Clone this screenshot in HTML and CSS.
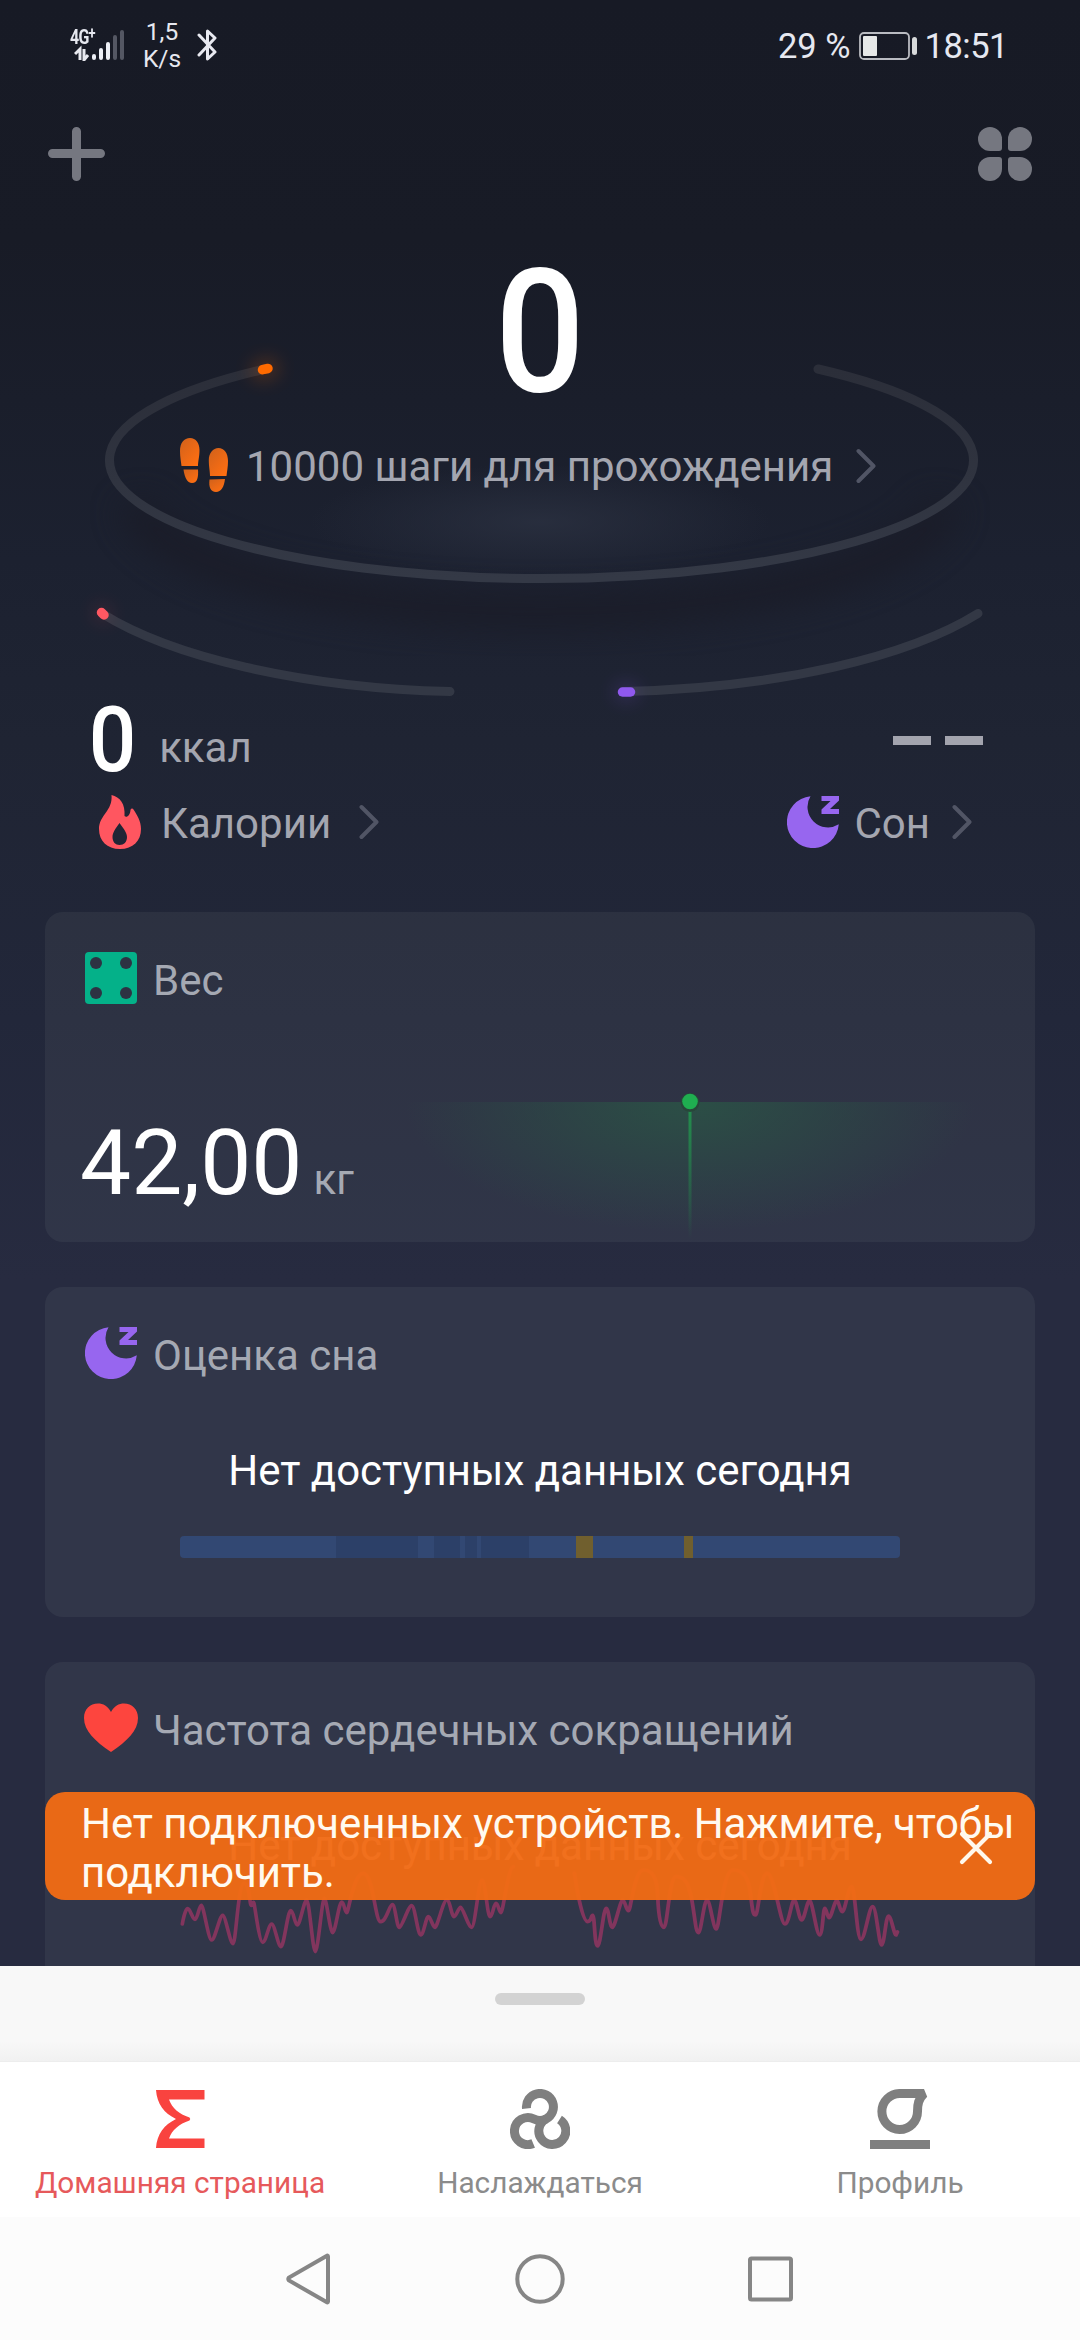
FILE: index.html
```html
<!DOCTYPE html>
<html lang="ru">
<head>
<meta charset="utf-8">
<title>Домашняя страница</title>
<link rel="stylesheet" href="styles.css">
</head>
<body>
<svg class="defs" width="0" height="0">
  <defs>
    <symbol id="moon" viewBox="0 0 52 52">
      <path d="M23.5 0.2 A26 26 0 1 0 51.8 28.3 A20.5 20.5 0 0 1 23.5 0.2Z" fill="#9766ef"/>
      <path d="M34.5 0H52V4.5L43 13H52V18H34.5V13.500L43.500 5H34.500Z" fill="#9766ef"/>
    </symbol>
    <symbol id="chevron" viewBox="0 0 20 36">
      <path d="M2.500 3L17.500 18L2.500 33" fill="none" stroke="#515565" stroke-width="4" stroke-linecap="round" stroke-linejoin="round"/>
    </symbol>
  </defs>
</svg>
<div class="phone">
  <main class="app">
    <header class="status">
      <div class="signal">
        <span class="net">4G<sup>+</sup></span>
        <svg width="52" height="32" viewBox="0 0 52 32">
          <path d="M1 25L6 20V31M10 20V31L14 26" fill="none" stroke="#e8e9f0" stroke-width="3"/>
          <g stroke-width="4" stroke-linecap="round" stroke="#eceef5">
            <path d="M20 27V29M27 21V29M34 15V29"/>
            <path d="M41 8V29M48 3V29" stroke="#545763"/>
          </g>
        </svg>
      </div>
      <div class="speed">1,5<br>K/s</div>
      <svg class="bt" width="20" height="34" viewBox="0 0 20 34"><path d="M2 7L18 24L10.500 31V3L18 10L2 27" fill="none" stroke="#e8e9f0" stroke-width="3" stroke-linecap="round" stroke-linejoin="round"/></svg>
      <div class="power">
        <span class="percent">29 %</span>
        <svg width="58" height="28" viewBox="0 0 58 28"><rect x="1" y="1" width="49" height="26" rx="4" fill="none" stroke="#b9bbc1" stroke-width="1.800"/><rect x="4" y="4" width="14" height="20" rx="1" fill="#e6e8e8"/><rect x="53" y="5" width="5" height="18" rx="2.500" fill="#d7d9da"/></svg>
        <span class="clock">18:51</span>
      </div>
    </header>

    <div class="toolbar">
      <svg width="58" height="54" viewBox="0 0 58 54"><path d="M28.500 4.500V49.500M4.500 26.500H52.500" stroke="#757780" stroke-width="9" stroke-linecap="round"/></svg>
      <div class="petals"><i></i><i></i><i></i><i></i></div>
    </div>

    <section class="hero">
      <svg class="rings" width="1080" height="696" viewBox="0 216 1080 696">
        <defs>
          <filter id="soft" x="-20%" y="-40%" width="140%" height="180%" color-interpolation-filters="sRGB"><feGaussianBlur stdDeviation="16"/></filter>
          <filter id="halo" filterUnits="userSpaceOnUse" x="0" y="216" width="1080" height="696" color-interpolation-filters="sRGB"><feGaussianBlur stdDeviation="9"/></filter>
          <radialGradient id="glow"><stop offset="0" stop-color="#2a3040" stop-opacity=".85"/><stop offset="1" stop-color="#2a3040" stop-opacity="0"/></radialGradient>
          <linearGradient id="track" x1="0" y1="0" x2="0" y2="1"><stop offset="0" stop-color="#2b2e39"/><stop offset="1" stop-color="#343946"/></linearGradient>
        </defs>
        <path d="M136 480A405 118 0 0 0 944 480" transform="translate(0 22)" fill="none" stroke="#1a1b26" stroke-width="34" opacity=".8" filter="url(#soft)"/>
        <ellipse cx="540" cy="522" rx="230" ry="58" fill="url(#glow)"/>
        <path d="M265 369A432 118.500 0 1 0 818 369" fill="none" stroke="url(#track)" stroke-width="9" stroke-linecap="round"/>
        <path d="M102 613.500C170 656 300 688 450 691.500M978 613.500C910 656 780 688 624 691.500" fill="none" stroke="#333845" stroke-width="9" stroke-linecap="round"/>
        <path d="M261 370.500L269 368.500" stroke="#ff6a00" stroke-width="20" stroke-linecap="round" opacity=".22" filter="url(#halo)"/>
        <path d="M101 612.500L104 615" stroke="#ff5560" stroke-width="16" stroke-linecap="round" opacity=".14" filter="url(#halo)"/>
        <path d="M623 692H630" stroke="#8f5cf0" stroke-width="18" stroke-linecap="round" opacity=".18" filter="url(#halo)"/>
        <path d="M262.500 369.700L268 368.500" stroke="#ff6a00" stroke-width="9.500" stroke-linecap="round"/>
        <path d="M101.500 612.500L104 615" stroke="#ff5862" stroke-width="9.500" stroke-linecap="round"/>
        <path d="M622.500 692H630.500" stroke="#9059ee" stroke-width="9.500" stroke-linecap="round"/>
      </svg>
      <div class="steps">0</div>
      <div class="goal">
        <svg width="48" height="54" viewBox="0 0 48 54">
          <defs><linearGradient id="sole" x1="0" y1="0" x2=".8" y2="1"><stop offset="0" stop-color="#d0611b"/><stop offset="1" stop-color="#ff6f12"/></linearGradient></defs>
          <g fill="url(#sole)">
            <path d="M10 0C16 0 19.500 5 19.500 12C19.500 19 18 23 18 28H1.500C1 23 0 19 0 13C0 5 4 0 10 0Z"/>
            <path d="M3.500 31.500L18 31.500C18.500 39 17.500 45 12 45C7 45 4.500 39 3.500 31.500Z"/>
            <path d="M38.500 10C44 10 48 15 48 23C48 29 47 33 46.500 38H30C30 33 28.800 29 28.800 22C28.800 15 33 10 38.500 10Z"/>
            <path d="M29.500 41.500L45 41C44 49 41 54 36 54C30.500 54 28.500 49 29.500 41.500Z"/>
          </g>
        </svg>
        <span>10000 шаги для прохождения</span>
        <svg class="chev" width="20" height="36"><use href="#chevron"/></svg>
      </div>
      <div class="stats">
        <div class="kcal"><b>0</b><span>ккал</span></div>
        <div class="blank"><i></i><i></i></div>
      </div>
      <div class="links">
        <div class="link">
          <svg width="42" height="54" viewBox="0 0 42 54"><path fill="#ff5660" fill-rule="evenodd" d="M12.500 0C21 2 26.500 9 25.500 21C27.500 23 31 21 31.500 15C32 13.500 33.500 13 34.500 14.500C38 20 42 26 42 34C42 46 34 54 21 54C8 54 0 46 0 34C0 20 14 16 12.500 0ZM20.500 28C16 34 13.500 38 13.500 42C13.500 47 16.500 50 20.500 50C25 50 28 47 28 42C28 38 25 34 20.500 28Z"/></svg>
          <span class="cal">Калории</span>
          <svg class="chev" width="20" height="36"><use href="#chevron"/></svg>
        </div>
        <div class="link">
          <svg width="52" height="52"><use href="#moon"/></svg>
          <span class="son">Сон</span>
          <svg class="chev" width="20" height="36"><use href="#chevron"/></svg>
        </div>
      </div>
    </section>

    <div class="cards">
      <section class="card">
        <div class="head"><svg width="52" height="52" viewBox="0 0 52 52"><rect width="52" height="52" rx="4" fill="#04b189"/><g fill="#2d3243"><circle cx="11" cy="11" r="6"/><circle cx="41" cy="11" r="6"/><circle cx="11" cy="41" r="6"/><circle cx="41" cy="41" r="6"/></g></svg><h2>Вес</h2></div>
        <div class="weight">
          <div class="value"><b>42,00</b><span>кг</span></div>
          <svg class="trend" width="580" height="154" viewBox="400 1087 580 154">
            <defs>
              <radialGradient id="area" gradientUnits="userSpaceOnUse" cx="0" cy="0" r="1" gradientTransform="translate(690 1103) scale(285 130)"><stop offset="0" stop-color="#2b5246" stop-opacity=".9"/><stop offset=".45" stop-color="#2b5246" stop-opacity=".5"/><stop offset="1" stop-color="#2b5246" stop-opacity="0"/></radialGradient>
              <linearGradient id="drop" gradientUnits="userSpaceOnUse" x1="0" y1="1112" x2="0" y2="1240"><stop offset="0" stop-color="#238d4d"/><stop offset="1" stop-color="#238d4d" stop-opacity="0"/></linearGradient>
            </defs>
            <rect x="400" y="1103" width="580" height="138" fill="url(#area)"/>
            <rect x="688.500" y="1112" width="3" height="128" fill="url(#drop)"/>
            <circle cx="690" cy="1103.500" r="9.500" fill="#274739"/>
            <circle cx="690" cy="1102.500" r="7.800" fill="#1fae50"/>
          </svg>
        </div>
      </section>

      <section class="card">
        <div class="head"><svg width="52" height="52"><use href="#moon"/></svg><h2>Оценка сна</h2></div>
        <p class="empty">Нет доступных данных сегодня</p>
        <div class="phases">
          <i class="light" style="width:156px"></i><i class="deep" style="width:82px"></i><i class="light" style="width:16px"></i><i class="deep" style="width:26px"></i><i class="light" style="width:5px"></i><i class="deep" style="width:12px"></i><i class="light" style="width:4px"></i><i class="deep" style="width:48px"></i><i class="light" style="width:47px"></i><i class="awake" style="width:17px"></i><i class="light" style="width:91px"></i><i class="awake" style="width:9px"></i><i class="light" style="width:207px"></i>
        </div>
      </section>

      <section class="card">
        <div class="head heart"><svg width="54" height="52" viewBox="0 0 54 52"><path d="M27 10C30 4 35 1.500 40 1.500C48 1.500 54 7 54 16C54 29 43 39 27 50C11 39 0 29 0 16C0 7 6 1.500 14 1.500C19 1.500 24 4 27 10Z" fill="#fd453e"/></svg><h2>Частота сердечных сокращений</h2></div>
        <p class="empty">Нет доступных данных сегодня</p>
        <svg class="wave" width="720" height="80" viewBox="180 1875 720 80">
          <g fill="none" stroke="#82355d" stroke-linecap="round" stroke-width="11">
            <path transform="translate(40 1650) scale(.33333)" d="M427 822S435 776 443 776S457 808 465 808S477 766 484 766S505 870 515 870S539 796 548 796S570 881 579 881S594 700 612 700S628 766 634 766S639 750 642 760S658 877 668 877S686 822 695 822S714 890 723 890S743 782 752 782S764 825 772 825S792 750 800 750S818 905 826 905S846 745 853 745S870 848 878 848S897 756 905 756S914 788 920 788S940 670 970 670S1005 815 1022 815S1048 764 1057 764S1070 832 1078 832S1105 767 1115 767S1133 855 1142 855S1158 800 1165 800S1178 832 1185 832S1210 750 1220 750S1235 800 1242 800S1255 772 1262 772S1285 832 1295 832S1316 690 1326 690S1342 800 1350 800S1361 760 1368 760S1377 788 1383 788S1405 650 1420 650"/>
            <path transform="translate(540 1650) scale(.34435 .33333)" d="M100 670C110 740 125 815 138 815S147 796 153 796S158 888 167 888S184 775 192 775S202 832 210 832S233 750 240 750S250 782 257 782S274 660 300 660S340 680 342 740S350 832 360 832S375 680 395 680S430 690 440 745S452 848 460 848S476 750 485 750S503 837 512 837S530 660 560 660S605 680 611 730S618 795 626 795S640 670 660 670S698 822 711 822S730 750 738 750S752 810 760 810S775 752 783 752S803 855 812 855S822 775 827 775S834 803 840 803S855 752 862 752S870 785 878 785S895 710 905 710S920 868 932 868S955 770 966 770S984 885 992 885S1004 798 1012 798S1028 855 1034 855L1038 846"/>
          </g>
        </svg>
      </section>
    </div>

    <aside class="notice">
      <p>Нет подключенных устройств. Нажмите, чтобы подключить.</p>
      <svg class="close" width="34" height="34" viewBox="0 0 34 34"><path d="M3 3L31 31M31 3L3 31" stroke="#fff8ec" stroke-width="4.200" stroke-linecap="round"/></svg>
    </aside>
  </main>

  <div class="sheet"><i></i></div>

  <nav class="tabs">
    <a class="tab active"><svg width="60" height="60" viewBox="-6 -1 60 60"><path fill="#f9433f" d="M0 0H48.500V9.500H13C16 18 23 24 33.500 27.500Q35 29 33.500 30.500C23 34 16 40 13 48.500H48.500V58H0C1 44 8 35 20 29C8 23 1 14 0 0Z"/></svg><span>Домашняя страница</span></a>
    <a class="tab"><svg width="60" height="60" viewBox="0 0 60 60"><g fill="none" stroke="#7f7f7f" stroke-width="9"><path d="M16.500 19.500A13.500 13.500 0 1 1 36 30A13.500 13.500 0 1 0 49.500 30.500"/><path d="M23.200 54.500A13.500 13.500 0 1 1 24 30A13.500 13.500 0 0 0 36 30"/></g></svg><span>Наслаждаться</span></a>
    <a class="tab"><svg width="60" height="60" viewBox="0 0 60 60"><path d="M30 4.500H54C48.500 10 47.500 15 47.500 22.500A17.800 18 0 1 1 30 4.500Z" fill="none" stroke="#7f7f7f" stroke-width="9" stroke-linejoin="bevel"/><rect y="51" width="60" height="9" fill="#7f7f7f"/></svg><span>Профиль</span></a>
  </nav>

  <footer class="system">
    <svg width="48" height="54" viewBox="0 0 48 54"><path d="M43 4.500V49.500Q43 51 41.500 50L4 28.500Q2.500 27 4 25.500L41.500 4Q43 3 43 4.500Z" fill="none" stroke="#868686" stroke-width="4"/></svg>
    <svg width="50" height="50" viewBox="0 0 50 50"><circle cx="25" cy="25" r="22.700" fill="none" stroke="#868686" stroke-width="4"/></svg>
    <svg width="46" height="46" viewBox="0 0 46 46"><rect x="3" y="2.500" width="41" height="41" rx="1.500" fill="none" stroke="#868686" stroke-width="4"/></svg>
  </footer>
</div>
</body>
</html>
```

FILE: styles.css
```css
* { box-sizing: border-box; }
body { margin: 0; background: #fcfcfc; font-family: Roboto, "Noto Sans", sans-serif; }
svg { display: block; flex: none; }
.defs { position: absolute; }
h2, p { margin: 0; font-weight: 400; }

.phone { width: 1080px; height: 2340px; display: flex; flex-direction: column; overflow: hidden; }
.app {
  position: relative; height: 1966px; flex: none; overflow: hidden;
  background: linear-gradient(#171a25 0, #181b26 240px, #1c2130 560px, #1f2433 740px, #22273a 1020px, #272b40 1280px, #272b40 100%);
}

.status { height: 92px; display: flex; padding-left: 70px; color: #e6e8f0; }
.signal { position: relative; width: 56px; padding: 29px 0 0 4px; }
.net { position: absolute; left: 0; top: 27px; font-size: 21px; line-height: 20px; font-weight: 700; letter-spacing: -1px; transform: scaleX(.76); transform-origin: 0 0; }
.net sup { font-size: 17px; line-height: 0; vertical-align: 5px; }
.speed { width: 52px; margin-left: 10px; padding-top: 18px; font-size: 24.500px; line-height: 27px; text-align: center; }
.bt { margin: 28px 0 0 9px; }
.power { display: flex; margin: 32px 72px 0 auto; }
.power span { font-size: 34.500px; line-height: 28px; white-space: nowrap; }
.percent { margin-right: 8px; }
.clock { margin-left: 8px; letter-spacing: -.5px; }

.toolbar { height: 124px; display: flex; justify-content: space-between; padding: 35px 48px 0; }
.petals { display: grid; grid-template: 24px 24px / 24px 24px; gap: 6px; }
.petals i { background: #757780; border-radius: 12px 12px 3px 12px; }
.petals i:nth-child(2) { border-radius: 12px 12px 12px 3px; }
.petals i:nth-child(3) { border-radius: 12px 3px 12px 12px; }
.petals i:nth-child(4) { border-radius: 3px 12px 12px 12px; }

.hero { position: relative; height: 696px; padding-top: 30px; color: #a4a6b0; font-size: 42px; line-height: 49px; }
.hero > div { position: relative; }
.rings { position: absolute; left: 0; top: 0; }
.steps { font-size: 172px; line-height: 172px; font-weight: 500; color: #fff; text-align: center; transform: scaleX(.92); }
.goal { display: flex; align-items: center; height: 54px; margin-top: 20px; padding-left: 180px; }
.goal span { margin: 2px 23px 0 18px; white-space: nowrap; }
.goal .chev { margin-top: 1px; }
.stats { display: flex; justify-content: space-between; height: 90px; margin-top: 204px; padding: 0 97px 0 87px; }
.kcal { display: flex; align-items: baseline; }
.kcal b { font-size: 90px; line-height: 90px; font-weight: 500; color: #fff; transform: scaleX(.93); }
.kcal span { margin-left: 21px; position: relative; top: -9px; }
.blank { display: flex; gap: 14px; padding-top: 40px; }
.blank i { width: 38px; height: 9px; background: #a3a4ae; }
.links { display: flex; justify-content: space-between; height: 54px; margin-top: 9px; padding: 0 108px 0 99px; }
.link { display: flex; align-items: center; }
.cal { margin: 3px 28px 0 20px; }
.son { margin: 2px 22px 0 15px; }

.cards { display: flex; flex-direction: column; gap: 45px; padding: 0 45px; }
.card { height: 330px; flex: none; padding-top: 40px; border-radius: 18px; background: rgba(235,255,240,.056); overflow: hidden; }
.head { display: flex; height: 52px; padding-left: 40px; }
.head h2 { margin: 4px 0 0 16px; font-size: 42px; line-height: 49px; color: #a5a9b3; white-space: nowrap; }
.head.heart { padding-left: 39px; }
.head.heart h2 { margin-left: 15px; }
.weight { display: flex; margin-top: 82px; justify-content: space-between; padding: 0 55px 0 35px; }
.value { display: flex; align-items: baseline; padding-top: 32px; }
.value b { font-size: 91px; line-height: 90px; font-weight: 400; color: #fff; }
.value span { margin-left: 11px; font-size: 42px; line-height: 49px; color: #a5a9b3; }
.empty { margin-top: 67px; font-size: 42px; line-height: 49px; color: #fff; text-align: center; }
.phases { display: flex; width: 720px; height: 22px; margin: 41px auto 0; border-radius: 4px; overflow: hidden; }
.light { background: #324873; }
.deep { background: #2c4068; }
.awake { background: #705f2e; }
.wave { margin: 5px 0 0 135px; overflow: visible; }

.notice { position: absolute; left: 45px; top: 1792px; width: 990px; height: 108px; padding: 7px 0 0 36px; border-radius: 20px; background: rgba(241,107,21,.965); }
.notice p { width: 940px; font-size: 42px; line-height: 49px; letter-spacing: -.07px; color: #fffaf0; }
.close { position: absolute; left: 914px; top: 39px; }

.sheet { height: 96px; flex: none; padding-top: 27px; background: linear-gradient(#f8f8f8 0, #f8f8f8 75px, #f1f1f1 95px, #e9e9e9 96px); }
.sheet i { display: block; width: 90px; height: 12px; margin: 0 auto; border-radius: 6px; background: #d3d3d3; }
.tabs { height: 155px; flex: none; display: grid; grid-template-columns: repeat(3, 360px); background: #fff; }
.tab { display: flex; flex-direction: column; align-items: center; padding-top: 27px; font-size: 29.800px; line-height: 36px; color: #8b8b8b; }
.tab span { margin-top: 16px; }
.tab.active { color: #e6595b; }
.system { flex: 1; display: flex; justify-content: center; align-items: center; gap: 182px; padding-right: 2px; background: #fcfcfc; }
```
